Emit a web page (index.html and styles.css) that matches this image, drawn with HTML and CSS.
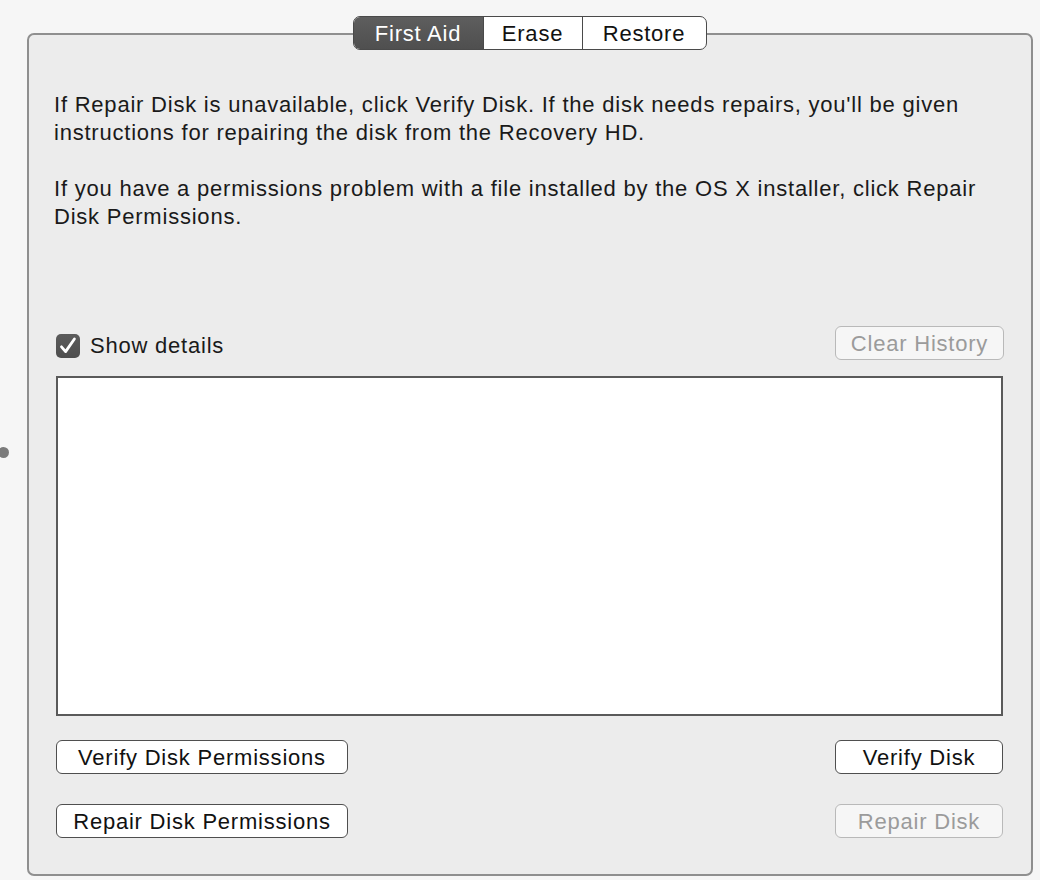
FILE: index.html
```html
<!DOCTYPE html>
<html>
<head>
<meta charset="utf-8">
<link rel="stylesheet" href="styles.css">
</head>
<body>
<div class="handle"></div>
<div class="panel">
  <div class="tabs">
    <div class="tab selected">First Aid</div>
    <div class="tab">Erase</div>
    <div class="tab">Restore</div>
  </div>
  <div class="info">
    <p>If Repair Disk is unavailable, click Verify Disk. If the disk needs repairs, you'll be given instructions for repairing the disk from the Recovery HD.</p>
    <p>If you have a permissions problem with a file installed by the OS X installer, click Repair Disk Permissions.</p>
  </div>
  <div class="row details-row">
    <label class="check">
      <span class="box"><svg width="24" height="24" viewBox="0 0 24 24"><path d="M5.5 12.8 L9.6 17.6 L18.4 5" fill="none" stroke="#fff" stroke-width="2.8" stroke-linecap="round" stroke-linejoin="round"/></svg></span>
      <span>Show details</span>
    </label>
    <div class="btn disabled clear">Clear History</div>
  </div>
  <div class="log"></div>
  <div class="row btn-row first">
    <div class="btn perm">Verify Disk Permissions</div>
    <div class="btn disk">Verify Disk</div>
  </div>
  <div class="row btn-row">
    <div class="btn perm">Repair Disk Permissions</div>
    <div class="btn disk disabled">Repair Disk</div>
  </div>
</div>
</body>
</html>
```
FILE: styles.css
```css
html, body {
  margin: 0;
  padding: 0;
}
body {
  background: #f6f6f6;
  font-family: "Liberation Sans", Arial, sans-serif;
  font-size: 22px;
  letter-spacing: 0.78px;
  color: #1a1a1a;
  width: 1040px;
  height: 880px;
  overflow: hidden;
  position: relative;
}
.handle {
  position: absolute;
  left: -2px;
  top: 447px;
  width: 11px;
  height: 11px;
  border-radius: 50%;
  background: #7b7b7b;
}
.panel {
  margin: 33px 0 0 27px;
  width: 1006px;
  height: 843px;
  box-sizing: border-box;
  border: 2px solid #8f8f8f;
  border-radius: 7px;
  background: #ececec;
  padding: 0 28px 0 27px;
  display: flex;
  flex-direction: column;
}
.tabs {
  align-self: center;
  margin-top: -19px;
  display: flex;
  width: 354px;
  height: 34px;
  box-sizing: border-box;
  border: 1.5px solid #4a4a4a;
  border-radius: 7px;
  overflow: hidden;
  background: #fff;
}
.tab {
  display: flex;
  align-items: center;
  justify-content: center;
  padding-top: 2px;
  box-sizing: border-box;
  color: #111;
  border-left: 1.5px solid #4a4a4a;
}
.tab:nth-child(1) { width: 129px; border-left: none; }
.tab:nth-child(2) { width: 99px; }
.tab:nth-child(3) { flex: 1; }
.tab.selected {
  background: linear-gradient(#5e5e5e, #4f4f4f);
  color: #fff;
}
.info {
  margin-top: 41px;
  margin-left: -2px;
  line-height: 28px;
}
.info p {
  margin: 0 0 28px 0;
}
.row {
  display: flex;
  justify-content: space-between;
  align-items: center;
}
.details-row {
  margin-top: 67px;
  height: 34px;
}
.check {
  display: flex;
  align-items: center;
  gap: 10px;
  margin-top: 6px;
}
.box {
  width: 24px;
  height: 24px;
  border-radius: 5px;
  background: linear-gradient(#5b5b5b, #4e4e4e);
  display: flex;
  align-items: center;
  justify-content: center;
}
.btn {
  height: 34px;
  box-sizing: border-box;
  padding-top: 2px;
  border: 1.5px solid #4f4f4f;
  border-radius: 6px;
  background: #fff;
  display: flex;
  align-items: center;
  justify-content: center;
  color: #111;
}
.btn.disabled {
  border-color: #b9b9b9;
  color: #9b9b9b;
  background: #f6f6f6;
}
.clear {
  width: 169px;
  margin-right: -1px;
}
.log {
  margin-top: 16px;
  height: 340px;
  box-sizing: border-box;
  border: 2px solid #5a5a5a;
  background: #fff;
}
.btn-row {
  margin-top: 30px;
}
.btn-row.first {
  margin-top: 24px;
}
.perm { width: 292px; }
.disk { width: 168px; }
```
